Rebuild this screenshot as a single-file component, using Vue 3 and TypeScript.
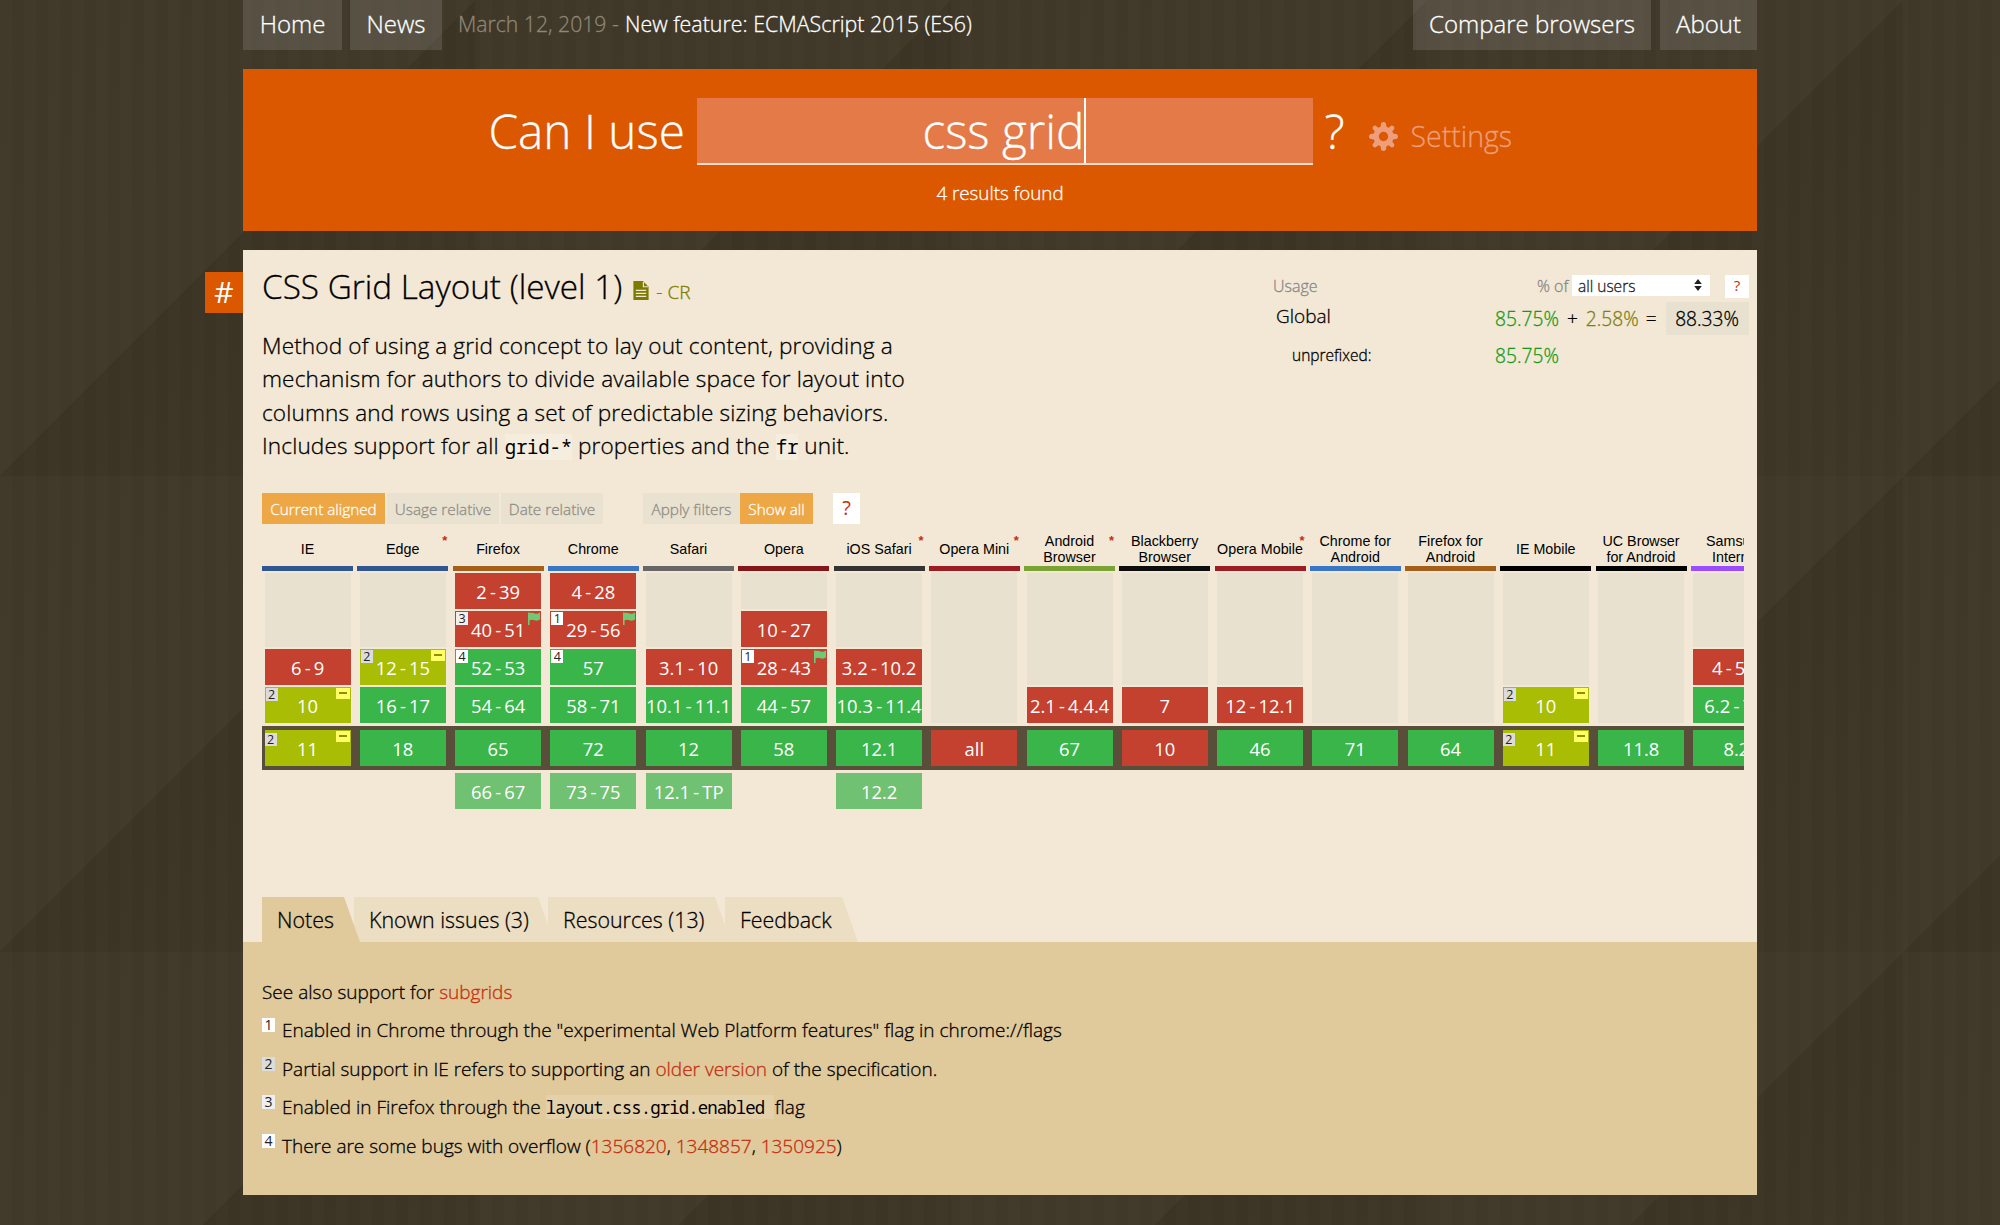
<script setup lang="ts">
interface Cell {
  range: string
  support: 'y' | 'n' | 'a'
  note?: number
  flag?: boolean
  partial?: boolean
}

interface Browser {
  name: string
  color: string
  star?: boolean
  past: Cell[]
  current: Cell
  future?: Cell
}

const n = (range: string, extra: Partial<Cell> = {}): Cell => ({ range, support: 'n', ...extra })
const y = (range: string, extra: Partial<Cell> = {}): Cell => ({ range, support: 'y', ...extra })
const a = (range: string): Cell => ({ range, support: 'a', note: 2, partial: true })

const browsers: Browser[] = [
  { name: 'IE', color: '#2f5690', past: [n('6-9'), a('10')], current: a('11') },
  { name: 'Edge', color: '#2f5690', star: true, past: [a('12-15'), y('16-17')], current: y('18') },
  {
    name: 'Firefox', color: '#a65f1b',
    past: [n('2-39'), n('40-51', { note: 3, flag: true }), y('52-53', { note: 4 }), y('54-64')],
    current: y('65'), future: y('66-67'),
  },
  {
    name: 'Chrome', color: '#3a76c4',
    past: [n('4-28'), n('29-56', { note: 1, flag: true }), y('57', { note: 4 }), y('58-71')],
    current: y('72'), future: y('73-75'),
  },
  { name: 'Safari', color: '#666666', past: [n('3.1-10'), y('10.1-11.1')], current: y('12'), future: y('12.1-TP') },
  { name: 'Opera', color: '#841619', past: [n('10-27'), n('28-43', { note: 1, flag: true }), y('44-57')], current: y('58') },
  { name: 'iOS Safari', color: '#333333', star: true, past: [n('3.2-10.2'), y('10.3-11.4')], current: y('12.1'), future: y('12.2') },
  { name: 'Opera Mini', color: '#9b1c22', star: true, past: [], current: n('all') },
  { name: 'Android Browser', color: '#7ba333', star: true, past: [n('2.1-4.4.4')], current: y('67') },
  { name: 'Blackberry Browser', color: '#0d0d0d', past: [n('7')], current: n('10') },
  { name: 'Opera Mobile', color: '#9b1c22', star: true, past: [n('12-12.1')], current: y('46') },
  { name: 'Chrome for Android', color: '#3a76c4', past: [], current: y('71') },
  { name: 'Firefox for Android', color: '#a65f1b', past: [], current: y('64') },
  { name: 'IE Mobile', color: '#000000', past: [a('10')], current: a('11') },
  { name: 'UC Browser for Android', color: '#000000', past: [], current: y('11.8') },
  { name: 'Samsung Internet', color: '#9a4dff', past: [n('4-5.4'), y('6.2-7.4')], current: y('8.2') },
]

const tabs = ['Notes', 'Known issues (3)', 'Resources (13)', 'Feedback']
</script>

<template>
  <div class="page">
    <nav class="nav">
      <a class="nav-btn home">Home</a>
      <a class="nav-btn news">News</a>
      <div class="headline"><span class="date">March 12, 2019 - </span><span>New feature: ECMAScript 2015 (ES6)</span></div>
      <a class="nav-btn compare">Compare browsers</a>
      <a class="nav-btn about">About</a>
    </nav>

    <header class="search">
      <div class="search-row">
        <span class="ask">Can I use</span>
        <div class="field"><span>css grid</span><i class="caret"></i></div>
        <span class="qmark">?</span>
        <svg class="gear" viewBox="0 0 30 30">
          <path fill-rule="evenodd" d="M12.6 1Q15-1 17.4 1L18.100 5 20.200 5.900 23.300 3.700Q26.300 3.600 26.300 6.700L24.100 9.800 25 12 29 12.600Q31 15 29 17.400L25 18 24.100 20.200 26.300 23.300Q26.300 26.400 23.300 26.300L20.200 24.100 18.100 25 17.400 29Q15 31 12.600 29L11.900 25 9.800 24.100 6.700 26.300Q3.600 26.400 3.700 23.300L5.900 20.200 5 18 1 17.400Q-1 15 1 12.600L5 12 5.900 9.800 3.700 6.700Q3.600 3.600 6.700 3.700L9.800 5.900 11.900 5zM15 10.200a4.800 4.800 0 1 0 0 9.600a4.800 4.800 0 1 0 0-9.600z" />
        </svg>
        <span class="settings">Settings</span>
      </div>
      <div class="results">4 results found</div>
    </header>

    <main class="card">
      <a class="hash">#</a>
      <div class="top">
        <div class="intro">
          <h1>
            <span>CSS Grid Layout (level 1)</span>
            <svg class="doc" viewBox="0 0 16 20"><path d="M0 0h10l6 6v14H0z" /><path class="lines" d="M10.500 1v5h5M2.500 9.800h11M2.500 13h11M2.500 16.200h11" /></svg>
            <small>- CR</small>
          </h1>
          <p>
            Method of using a grid concept to lay out content, providing a<br />
            mechanism for authors to divide available space for layout into<br />
            columns and rows using a set of predictable sizing behaviors.<br />
            Includes support for all <code>grid-*</code> properties and the <code>fr</code> unit.
          </p>
        </div>
        <div class="usage">
          <div class="usage-head">
            <span class="lbl">Usage</span>
            <span class="of">% of</span>
            <div class="select"><span>all users</span>
              <svg viewBox="0 0 8 12"><path d="M4 0l3.800 5H.2zM4 12l3.800-5H.2z" /></svg>
            </div>
            <a class="help small">?</a>
          </div>
          <div class="usage-row">
            <span class="global">Global</span>
            <span class="g pct">85.75%</span><span class="op">+</span><span class="o pct">2.58%</span><span class="op eq">=</span><span class="total pct">88.33%</span>
          </div>
          <div class="usage-row second">
            <span class="unpre">unprefixed:</span>
            <span class="g pct">85.75%</span>
          </div>
        </div>
      </div>

      <div class="controls">
        <a class="btn on aligned">Current aligned</a>
        <a class="btn usage-rel">Usage relative</a>
        <a class="btn date-rel">Date relative</a>
        <a class="btn filters">Apply filters</a>
        <a class="btn on show">Show all</a>
        <a class="help">?</a>
      </div>

      <div class="table">
        <div class="line heads">
          <div v-for="b in browsers" :key="b.name" class="head" :style="{ borderColor: b.color }">
            <span>{{ b.name }}</span><i v-if="b.star">*</i>
          </div>
        </div>
        <div class="line past">
          <div v-for="b in browsers" :key="b.name" class="col">
            <div v-if="b.past.length < 4" class="filler"></div>
            <div v-for="c in b.past" :key="c.range" class="cell" :class="c.support">
              <sup v-if="c.note" :class="'n' + c.note">{{ c.note }}</sup>
              <template v-for="(part, i) in c.range.split('-')" :key="i"><b v-if="i">-</b>{{ part }}</template>
              <svg v-if="c.flag" class="flag" viewBox="0 0 12 13"><path d="M0 .6h1.600v.6c2-1 3.400-.4 5 .3 1.800.7 3.400.4 5.400-.9v7c-2 1.200-3.600 1.400-5.400.7-1.600-.7-3-1-5-.1V13H0z" /></svg>
              <em v-if="c.partial"></em>
            </div>
          </div>
        </div>
        <div class="line current">
          <div v-for="b in browsers" :key="b.name" class="cell" :class="b.current.support">
            <sup v-if="b.current.note" :class="'n' + b.current.note">{{ b.current.note }}</sup>
            {{ b.current.range }}
            <em v-if="b.current.partial"></em>
          </div>
        </div>
        <div class="line future">
          <div v-for="b in browsers" :key="b.name" class="col">
            <div v-if="b.future" class="cell f">
              <template v-for="(part, i) in b.future.range.split('-')" :key="i"><b v-if="i">-</b>{{ part }}</template>
            </div>
          </div>
        </div>
      </div>

      <div class="tabs">
        <div v-for="(t, i) in tabs" :key="t" class="tab" :class="'t' + i">{{ t }}</div>
      </div>

      <section class="notes">
        <p>See also support for <a>subgrids</a></p>
        <p><sup class="n1">1</sup>Enabled in Chrome through the "experimental Web Platform features" flag in chrome://flags</p>
        <p><sup class="n2">2</sup>Partial support in IE refers to supporting an <a>older version</a> of the specification.</p>
        <p><sup class="n3">3</sup>Enabled in Firefox through the <code>layout.css.grid.enabled&nbsp;</code><span class="after">flag</span></p>
        <p><sup class="n4">4</sup>There are some bugs with overflow (<a>1356820</a>, <a>1348857</a>, <a>1350925</a>)</p>
      </section>
    </main>
  </div>
</template>

<style>
body { margin: 0; background: #3d3526; overflow: hidden; }
</style>

<style scoped>
.page {
  box-sizing: border-box;
  height: 1225px;
  padding: 0 243px;
  overflow: hidden;
  font-family: "Open Sans", sans-serif;
  font-weight: 300;
  color: #000;
  -webkit-text-stroke: 0.3px;
  background:
    repeating-linear-gradient(90deg, rgba(255, 255, 255, 0.012) 0 12px, transparent 12px 24px),
    linear-gradient(135deg, #3f3727 0, #403929 50%, #3b3323 50%, #3e3626 100%) -1px 0 / 476px 476px;
}
.nav { display: flex; height: 50px; color: #fff; font-size: 24px; line-height: 47px; }
.nav-btn { box-sizing: border-box; background: rgba(255, 255, 255, 0.12); text-align: center; }
.home { width: 99px; margin-right: 8px; }
.news { width: 92px; margin-right: 16px; }
.compare { width: 238px; margin-left: auto; margin-right: 9px; }
.about { width: 97px; }
.headline { display: flex; font-size: 21.400px; line-height: 48.500px; white-space: pre; }
.date { color: #8e8676; font-size: 21.200px; width: 167px; }

.search { margin-top: 19px; height: 162px; background: #db5700; color: #fff; overflow: hidden; }
.search-row { display: flex; margin-top: 29px; height: 67px; line-height: 66px; font-size: 47.700px; padding-left: 245.500px; white-space: nowrap; }
.ask { width: 208px; }
.field { box-sizing: border-box; width: 616px; height: 67px; background: #e37a47; border-bottom: 2px solid #f8dccb; display: flex; justify-content: center; }
.caret { width: 2px; height: 65px; background: #fff; }
.qmark { margin-left: 12px; width: 44px; }
.gear { width: 29px; height: 29px; margin-top: 24px; fill: #ee9e7a; }
.settings { margin-left: 13px; font-size: 28.500px; line-height: 76px; color: #ee9e7a; }
.results { text-align: center; font-size: 18.800px; line-height: 28px; margin-top: 14px; }

.card { position: relative; margin-top: 19px; height: 945px; background: #f2e8d5; }
.hash { position: absolute; left: -38px; top: 22px; width: 38px; height: 41px; background: #db5700; color: #fff; font-size: 30px; font-weight: 400; -webkit-text-stroke: 0; line-height: 40px; text-align: center; }
.top { display: flex; height: 243px; justify-content: space-between; }
.intro { padding-left: 19px; width: 720px; }
h1 { margin: 0; padding-top: 15px; height: 43px; font-size: 33.300px; font-weight: 300; line-height: 42px; display: flex; align-items: baseline; white-space: nowrap; }
.doc { width: 16px; height: 19px; margin: 16px 7px 0 11px; fill: #7b7b00; align-self: flex-start; }
.lines { fill: none; stroke: #f2e8d5; stroke-width: 1.2; }
small { font-size: 19px; color: #7b7b00; }
.intro p { margin: 21px 0 0; font-size: 22.600px; letter-spacing: 0.13px; line-height: 33.300px; white-space: nowrap; }
code { font-family: "Noto Sans Mono", "DejaVu Sans Mono", monospace; font-weight: 400; -webkit-text-stroke: 0; line-height: 1; font-size: 19px; letter-spacing: -0.2px; background: rgba(255, 255, 255, 0.25); }
.usage { width: 484px; padding-top: 25px; }
.usage-head { display: flex; height: 23px; line-height: 22px; font-size: 16px; }
.lbl { color: #888; width: 264px; }
.of { color: #888; width: 35px; }
.select { box-sizing: border-box; width: 138px; height: 21px; background: #fff; display: flex; justify-content: space-between; padding: 0 8px 0 6px; font-size: 15.500px; color: #222; }
.select svg { width: 8px; height: 12px; margin-top: 4px; fill: #222; }
.help { width: 27px; height: 31px; background: #fff; color: #c42e0f; text-align: center; font-size: 20px; line-height: 30px; font-weight: 400; -webkit-text-stroke: 0; margin-left: 20px; }
.help.small { width: 24px; height: 23px; font-size: 15px; line-height: 21px; margin-left: 15px; }
.usage-row { display: flex; margin-top: 4px; line-height: 33px; }
.usage-row > * { flex: none; }
.usage-row.second { margin-top: 4px; }
.global { font-size: 19px; width: 219px; padding-left: 3px; line-height: 28px; }
.unpre { font-size: 15.500px; width: 203px; padding-left: 19px; }
.pct { font-size: 19.200px; }
.g { color: #179a1b; }
.o { color: #7f7f10; }
.op { font-size: 19px; margin: 0 8px; }
.eq { margin: 0 7px; }
.total { background: #e9e1cf; padding: 0 10px 0 9px; margin-left: auto; margin-right: 8px; }

.controls { display: flex; padding-left: 19px; }
.btn { box-sizing: border-box; height: 31px; line-height: 32px; font-size: 15.300px; text-align: center; color: #8f8c86; background: #e9e2d0; margin-right: 2px; }
.btn.on { background: #eea745; color: #fff; }
.aligned { width: 123px; }
.usage-rel { width: 112px; }
.date-rel { width: 102px; }
.filters { width: 97px; margin-left: 38px; margin-right: 0; }
.show { width: 73px; margin: 0; }

.table { margin: 5px 13px 0 19px; height: 368px; overflow: hidden; -webkit-text-stroke: 0; }
.line { display: flex; gap: 9.250px; width: 1530px; padding-left: 2.600px; }
.line > * { flex: none; width: 86px; }
.heads { gap: 4.250px; padding-left: 0; height: 42px; }
.heads .head { position: relative; width: 91px; box-sizing: border-box; border-bottom: 5px solid; padding-top: 3px; display: flex; align-items: center; justify-content: center; text-align: center; font: 400 14.300px/16.500px "Liberation Sans", Arial, sans-serif; }
.head i { position: absolute; top: 5px; right: 1px; font: 700 13px/14px "Liberation Sans", sans-serif; color: #c42e0f; }
.head span { padding: 0 2px; }
.past { margin-top: 2px; height: 149.700px; }
.col { display: flex; flex-direction: column; gap: 2.300px; justify-content: flex-end; }
.filler { flex: 1; background: #e9e1cf; }
.cell { position: relative; height: 35.700px; line-height: 37px; text-align: center; font-size: 18.400px; font-weight: 400; color: #fff; white-space: nowrap; display: flex; justify-content: center; overflow: hidden; }
.cell b { font-weight: 400; margin: 0 3.200px; }
.y { background: #39b54a; }
.n { background: #c4412f; }
.a { background: #a8bd04; }
.f { background: #71c172; }
.cell sup { position: absolute; left: 1px; top: 1px; }
sup { width: 12px; height: 13px; font-size: 12.500px; line-height: 14px; font-weight: 400; text-align: center; color: #222; background: #fff; -webkit-text-stroke: 0; }
.n2 { background: #dcdcdc; }
.n3 { background: #efefef; }
.n1, .n4 { background: #fff; }
.flag { position: absolute; right: 1px; top: 1px; width: 12px; height: 13px; fill: #70c973; }
.cell em { position: absolute; right: 1px; top: 1px; width: 14px; height: 11px; background: linear-gradient(#8f8f00, #8f8f00) center 4px / 8px 2px no-repeat #ffff66; }
.current { background: #594e39; padding-top: 4.600px; padding-bottom: 4.600px; margin-top: 2.900px; height: 35.700px; }
.current .cell sup { left: 0; top: 3px; }
.future { margin-top: 2.200px; height: 36px; }

.tabs { display: flex; padding-left: 19px; height: 45px; font-size: 21.400px; line-height: 46px; }
.tab { box-sizing: border-box; padding-left: 15px; margin-right: -6px; background: #ecdec3; white-space: nowrap; clip-path: polygon(0 0, calc(100% - 16px) 0, 100% 100%, 0 100%); }
.t0 { width: 98px; background: #e0c99b; position: relative; z-index: 1; }
.t1 { width: 200px; }
.t2 { width: 183px; }
.t3 { width: 133px; }

.notes { box-sizing: border-box; height: 253px; padding: 31px 19px 0; background: #e0c99b; font-size: 19px; }
.notes p { margin: 0; height: 38.400px; line-height: 38.400px; white-space: nowrap; }
.notes a { color: #c42e0f; }
.notes sup { display: inline-block; margin-right: 7px; position: relative; top: -7px; vertical-align: baseline; width: 13px; height: 14px; font-size: 14px; line-height: 14px; }
.notes code { font-size: 17.400px; letter-spacing: -0.93px; background: rgba(255, 255, 255, 0.15); }
.after { margin-left: 1px; }
</style>
